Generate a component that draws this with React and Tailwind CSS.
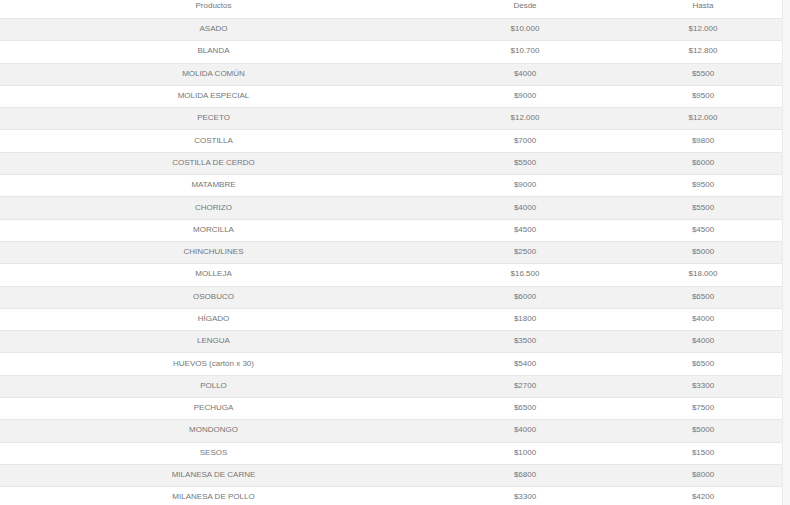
const rows = [
  ["ASADO", "$10.000", "$12.000"],
  ["BLANDA", "$10.700", "$12.800"],
  ["MOLIDA COMÚN", "$4000", "$5500"],
  ["MOLIDA ESPECIAL", "$9000", "$9500"],
  ["PECETO", "$12.000", "$12.000"],
  ["COSTILLA", "$7000", "$9800"],
  ["COSTILLA DE CERDO", "$5500", "$6000"],
  ["MATAMBRE", "$9000", "$9500"],
  ["CHORIZO", "$4000", "$5500"],
  ["MORCILLA", "$4500", "$4500"],
  ["CHINCHULINES", "$2500", "$5000"],
  ["MOLLEJA", "$16.500", "$18.000"],
  ["OSOBUCO", "$6000", "$6500"],
  ["HÍGADO", "$1800", "$4000"],
  ["LENGUA", "$3500", "$4000"],
  ["HUEVOS (cartón x 30)", "$5400", "$6500"],
  ["POLLO", "$2700", "$3300"],
  ["PECHUGA", "$6500", "$7500"],
  ["MONDONGO", "$4000", "$5000"],
  ["SESOS", "$1000", "$1500"],
  ["MILANESA DE CARNE", "$6800", "$8000"],
  ["MILANESA DE POLLO", "$3300", "$4200"],
];

const PriceRow = ({ cells, odd }) => (
  <div
    className={`grid grid-cols-[427px_196px_160px] h-[22.3px] items-center border-t border-[#e6e6e6] ${
      odd ? "bg-[#f2f2f2]" : "bg-white"
    }`}
  >
    {cells.map((c, i) => (
      <div key={i} className="text-center -mt-px">
        {c}
      </div>
    ))}
  </div>
);

export default function App() {
  return (
    <div
      className="w-[790px] h-[505px] overflow-hidden bg-[#f6f6f6] text-[8px] text-[#767676]"
      style={{ fontFamily: '"Liberation Sans", Arial, sans-serif' }}
    >
      <div className="w-[783px] border-r border-[#ececec]">
        <div className="grid grid-cols-[427px_196px_160px] h-[18px] items-center bg-white">
          <div className="text-center -mt-[6px]">Productos</div>
          <div className="text-center -mt-[6px]">Desde</div>
          <div className="text-center -mt-[6px]">Hasta</div>
        </div>
        {rows.map((r, i) => (
          <PriceRow key={r[0]} cells={r} odd={i % 2 === 0} />
        ))}
      </div>
    </div>
  );
}
